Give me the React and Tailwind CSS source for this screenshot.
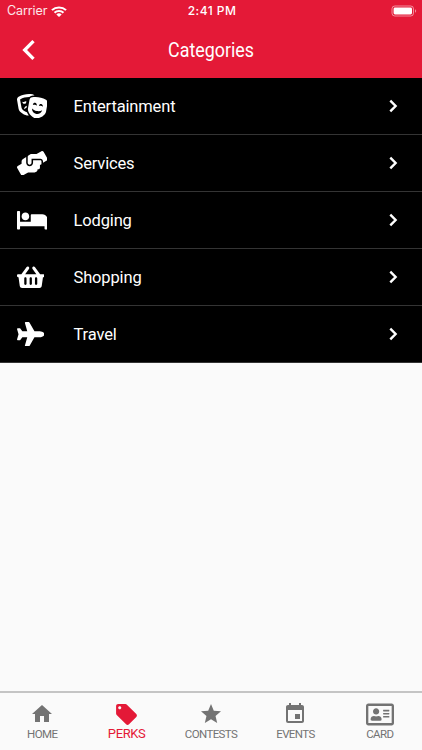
import {
  FaTheaterMasks,
  FaHandsHelping,
  FaBed,
  FaShoppingBasket,
  FaPlane,
  FaRegAddressCard,
} from "react-icons/fa";
import {
  MdChevronLeft,
  MdHome,
  MdLocalOffer,
  MdStar,
  MdEvent,
} from "react-icons/md";

const categories = [
  { name: "Entertainment", icon: FaTheaterMasks, size: "h-[24.5px] w-[30.6px]" },
  { name: "Services", icon: FaHandsHelping, size: "h-[24.5px] w-[30.6px]" },
  { name: "Lodging", icon: FaBed, size: "h-[24.5px] w-[30.6px]" },
  { name: "Shopping", icon: FaShoppingBasket, size: "h-[24.5px] w-[27.5px]" },
  { name: "Travel", icon: FaPlane, size: "h-[24.5px] w-[27.5px]" },
];

const tabs = [
  { name: "HOME", icon: MdHome, size: "size-6" },
  { name: "PERKS", icon: MdLocalOffer, size: "size-[25px]", active: true },
  { name: "CONTESTS", icon: MdStar, size: "size-6" },
  { name: "EVENTS", icon: MdEvent, size: "size-6" },
  { name: "CARD", icon: FaRegAddressCard, size: "h-[25px] w-[28px]" },
];

function StatusBar() {
  return (
    <div className="grid h-[22px] grid-cols-3 items-center pr-[5px] pl-[7px] font-['Inter',sans-serif] text-white">
      <div className="flex items-center gap-[4px]">
        <span className="text-[12.5px] tracking-[-0.1px] text-white/90">Carrier</span>
        <svg className="h-[11px] w-[16px]" viewBox="0 0 15 11" preserveAspectRatio="none" fill="none" stroke="white" strokeWidth="2">
          <path d="M0.9 4.1a9.4 9.4 0 0 1 13.2 0" />
          <path d="M3.3 6.7a6 6 0 0 1 8.4 0" />
          <path d="M7.5 11 5 8.5a3.6 3.6 0 0 1 5 0Z" fill="white" stroke="none" />
        </svg>
      </div>
      <span className="text-center text-[12px] font-medium tracking-[0.45px] whitespace-nowrap">2:41 PM</span>
      <svg className="h-[12px] w-[26px] justify-self-end" viewBox="0 0 26 12" fill="none">
        <rect x="1" y="1" width="21.5" height="10" rx="2.8" stroke="white" strokeOpacity="0.5" />
        <rect x="2.6" y="2.5" width="18.4" height="7" rx="1.4" fill="white" />
        <path d="M24 4.3v3.4c.8-.3 1.2-.9 1.2-1.7s-.4-1.4-1.2-1.7Z" fill="white" fillOpacity="0.5" />
      </svg>
    </div>
  );
}

function Header() {
  return (
    <header className="h-[78px] bg-[#e41937] text-white">
      <StatusBar />
      <div className="grid h-[56px] grid-cols-[60px_1fr_60px] items-center">
        <button type="button" aria-label="Back" className="ml-[9px]">
          <MdChevronLeft className="size-10" />
        </button>
        <h1 className="scale-x-[0.85] text-center text-[21px] leading-none">Categories</h1>
      </div>
    </header>
  );
}

function CategoryRow({ name, icon: Icon, size }) {
  return (
    <li className="flex h-[57px] items-center border-b border-[#343434] pr-[17px] pl-[16.5px] text-white">
      <span className="w-[57px]">
        <Icon className={size} />
      </span>
      <span className="flex-1 pt-[2px] text-[16.5px] tracking-[-0.15px]">{name}</span>
      <svg className="size-6" viewBox="0 0 24 24" fill="none" stroke="currentColor" strokeWidth="2.4">
        <path d="m9.3 6.7 5.3 5.3-5.3 5.3" />
      </svg>
    </li>
  );
}

function TabBar() {
  return (
    <nav className="flex h-[59px] border-t-2 border-[#c4c4c4] bg-[#fafafa]">
      {tabs.map(({ name, icon: Icon, size, active }) => (
        <button
          key={name}
          type="button"
          className={
            active
              ? "flex flex-1 flex-col items-center pt-[9px] text-[13px] tracking-[-0.4px] text-[#e41937]"
              : "flex flex-1 flex-col items-center pt-[9px] text-[11.5px] tracking-[-0.6px] text-[#737373]"
          }
        >
          <span className="flex h-6 items-center">
            <Icon className={size} />
          </span>
          <span className="leading-4">{name}</span>
        </button>
      ))}
    </nav>
  );
}

export default function App() {
  return (
    <div className="flex h-[750px] w-[422px] flex-col overflow-hidden bg-[#fafafa] font-['Roboto',sans-serif]">
      <Header />
      <ul className="bg-black">
        {categories.map((category) => (
          <CategoryRow key={category.name} {...category} />
        ))}
      </ul>
      <main className="flex-1" />
      <TabBar />
    </div>
  );
}
